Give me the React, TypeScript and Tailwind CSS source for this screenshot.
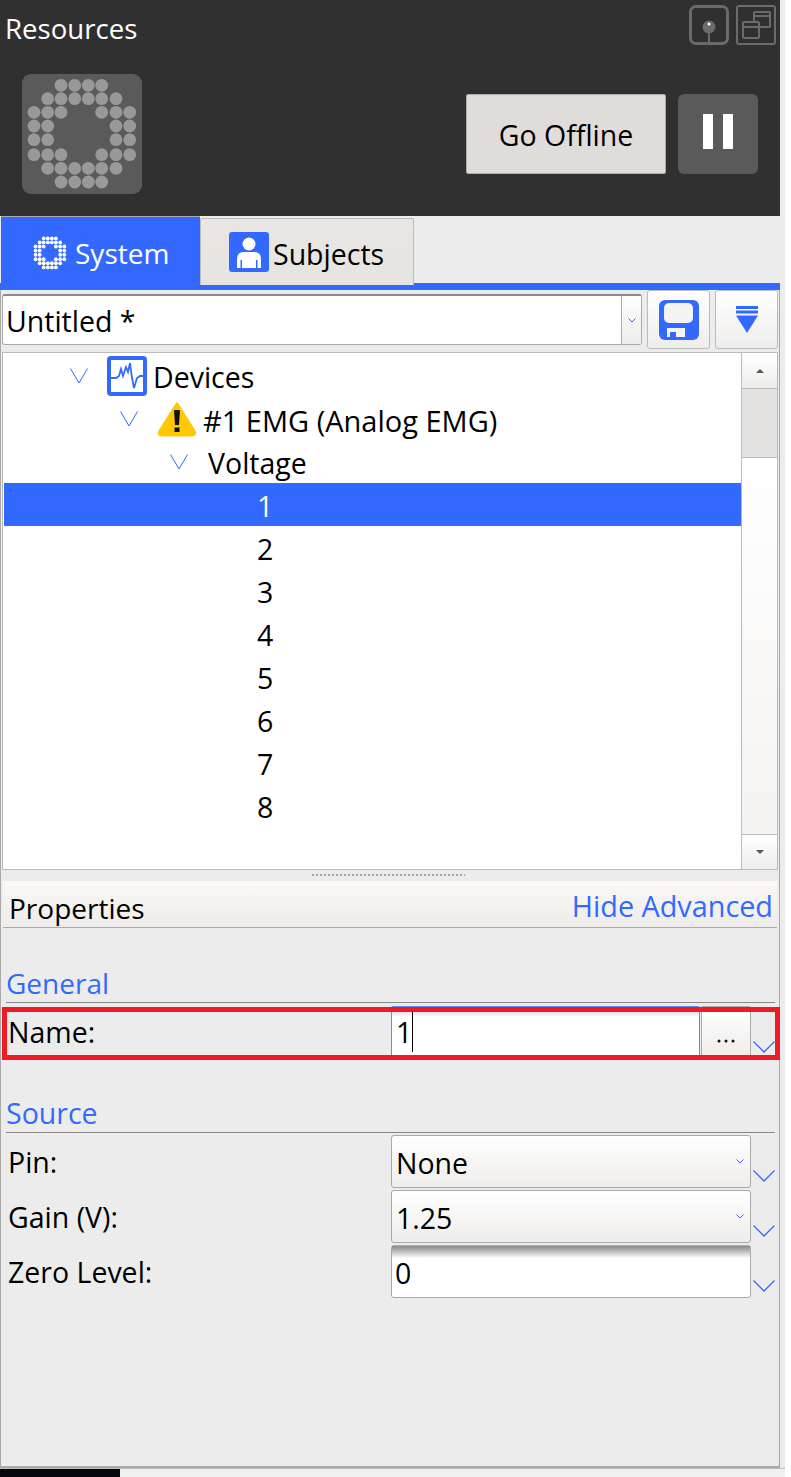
const BLUE = "#3369ff";

const logoRows = [
  [2, 3, 4, 5],
  [1, 2, 3, 4, 5, 6],
  [0, 1, 2, 5, 6, 7],
  [0, 1, 6, 7],
  [0, 1, 6, 7],
  [0, 1, 2, 5, 6, 7],
  [1, 2, 3, 4, 5, 6],
  [2, 3, 4, 5],
];
const logoX = [12, 25.7, 39, 52.7, 66.3, 79.7, 94, 107.7];
const logoY = [11.3, 24.7, 38.3, 52, 65.7, 80.7, 94.3, 108];

const LogoDots = ({ color, size }: { color: string; size: number }) => (
  <svg width={size} height={size} viewBox="0 0 120 120" className="shrink-0">
    {logoRows.map((cols, r) =>
      cols.map((c) => <circle key={`${r}-${c}`} cx={logoX[c]} cy={logoY[r]} r="6.4" fill={color} />)
    )}
  </svg>
);

const Chevron = ({ w = 18, h = 16, color = BLUE }: { w?: number; h?: number; color?: string }) => (
  <svg width={w} height={h} viewBox="0 0 18 16" fill="none" className="shrink-0">
    <path d="M0.5 0.5 L9 15 L17.5 0.5" stroke={color} strokeWidth="1" />
  </svg>
);

const SmallChevron = () => (
  <svg width="8" height="5" viewBox="0 0 8 5" fill="none" className="shrink-0">
    <path d="M0.5 0.5 L4 4 L7.5 0.5" stroke={BLUE} strokeWidth="1" />
  </svg>
);

const RowChevron = () => (
  <svg width="22" height="12" viewBox="0 0 22 12" fill="none" className="shrink-0">
    <path d="M0.5 0.5 L11 11 L21.5 0.5" stroke={BLUE} strokeWidth="1.3" />
  </svg>
);

const TreeRow = ({ children, className = "" }: { children: React.ReactNode; className?: string }) => (
  <div className={`flex h-[43px] items-center ${className}`}>{children}</div>
);

const SelectField = ({ value }: { value: string }) => (
  <div className="flex h-[53px] w-[360px] items-center justify-between rounded-[3px] border border-[#aaaaaa] bg-gradient-to-b from-white to-[#efedeb] pl-[4px] pr-[6px]">
    <span className="mt-[4px]">{value}</span>
    <SmallChevron />
  </div>
);

const PropRow = ({ label, children }: { label: string; children: React.ReactNode }) => (
  <div className="flex h-[53px]">
    <div className="flex w-[390px] items-center pl-[7px] pt-[1px]">{label}</div>
    {children}
    <div className="ml-[2px] flex items-end pb-[6px]">
      <RowChevron />
    </div>
  </div>
);

export default function App() {
  return (
    <div className="relative h-[1477px] w-full overflow-hidden bg-white font-['Open_Sans',sans-serif] text-[28.5px] leading-none text-black">
      <div className="h-[1477px] w-[785px] bg-[#ececec]">
        {/* top bar */}
        <div className="flex h-[216px] w-[780px] justify-between bg-[#303030]">
          <div className="pl-[5px] pt-[10px]">
            <div className="h-[36px] text-[27.6px] leading-[36px] text-white">Resources</div>
            <div className="ml-[17px] mt-[28px] h-[120px] w-[120px] rounded-[9px] bg-[#5a5a5a]">
              <LogoDots color="#999999" size={120} />
            </div>
          </div>
          <div className="flex flex-col items-end pr-[4px] pt-[5px]">
            <div className="flex gap-[7px]">
              <div className="h-[40px] w-[40px] rounded-[7px] border-[3px] border-[#6b6b6b]">
                <svg width="34" height="34" viewBox="0 0 34 34">
                  <circle cx="17" cy="19" r="6.5" fill="#6b6b6b" />
                  <rect x="16" y="21" width="2" height="13" fill="#6b6b6b" />
                  <circle cx="17" cy="16" r="1.5" fill="#ffffff" />
                </svg>
              </div>
              <div className="h-[40px] w-[40px] rounded-[3px] border-2 border-[#6b6b6b]">
                <svg width="36" height="36" viewBox="0 0 36 36" fill="none" stroke="#6b6b6b" strokeWidth="2">
                  <rect x="16" y="5" width="16" height="15" rx="1" />
                  <rect x="5" y="15" width="16" height="16" rx="1" fill="#303030" />
                  <path d="M5 20H21M16 9H32" />
                </svg>
              </div>
            </div>
            <div className="mr-[18px] mt-[49px] flex gap-[12px]">
              <div className="flex h-[80px] w-[200px] items-center justify-center rounded-[2px] border border-[#aaaaaa] bg-[#dfdcda] pt-[2px]">
                Go Offline
              </div>
              <div className="flex h-[80px] w-[80px] items-start justify-center gap-[10px] rounded-[6px] bg-[#5a5a5a] pt-[20px]">
                <div className="h-[35px] w-[10px] bg-white" />
                <div className="h-[35px] w-[10px] bg-white" />
              </div>
            </div>
          </div>
        </div>

        {/* tabs */}
        <div className="flex h-[67px] w-[780px] items-start pl-[1px]">
          <div className="flex h-[67px] w-[199px] items-center border-t border-[#aaaaaa] bg-[#3369ff] pl-[31px] pt-[5px] text-[28px] text-white">
            <LogoDots color="#ffffff" size={36} />
            <span className="ml-[7px]">System</span>
          </div>
          <div className="relative z-10 mt-[2px] flex h-[67px] w-[214px] items-center rounded-t-[2px] border border-b-0 border-[#bbbbbb] bg-gradient-to-b from-[#e9e6e3] to-[#e6e4e1] pl-[28px]">
            <div className="flex h-[40px] w-[40px] items-center justify-center rounded-[3px] bg-[#3369ff]">
              <svg width="40" height="40" viewBox="0 0 40 40" fill="white">
                <circle cx="20" cy="12" r="6.5" />
                <path d="M8 36 V27 Q8 20 15 20 H25 Q32 20 32 27 V36 H28.5 V28 H27 V36 H13 V28 H11.5 V36 Z" />
              </svg>
            </div>
            <span className="ml-[4px] mt-[4px]">Subjects</span>
          </div>
        </div>
        <div className="h-[7px] w-[780px] bg-[#3369ff]" />

        {/* main panel */}
        <div className="h-[1178px] w-[780px] border-x border-b-2 border-[#aaaaaa]">
          <div className="flex h-[62px] pl-[1px]">
            <div className="mt-[4px] flex h-[51px] w-[640px] rounded-[3px] border border-t-2 border-[#aaaaaa] border-t-[#8a8a8a] bg-white">
              <div className="flex flex-1 items-center pl-[3px] pt-[2px]">Untitled *</div>
              <div className="flex w-[20px] items-center justify-center border-l border-[#aaaaaa] bg-gradient-to-b from-white to-[#efedeb]">
                <SmallChevron />
              </div>
            </div>
            <div className="ml-[5px] flex h-[59px] w-[63px] items-center justify-center rounded-[3px] border border-[#bbbbbb] bg-gradient-to-b from-white to-[#efedeb]">
              <svg width="40" height="40" viewBox="0 0 40 40">
                <rect width="40" height="40" rx="6" fill="#3369ff" />
                <rect x="5" y="3" width="29" height="20" rx="5" fill="#f4f4f4" />
                <path d="M8 28 H26 V37 H17 V32 H11 V37 H8 Z" fill="#f4f4f4" />
              </svg>
            </div>
            <div className="ml-[5px] flex h-[59px] w-[63px] items-center justify-center rounded-[3px] border border-[#bbbbbb] bg-gradient-to-b from-white to-[#efedeb]">
              <svg width="22" height="27" viewBox="0 0 22 27" fill="#3369ff">
                <rect x="0" y="0" width="22" height="3" />
                <rect x="0" y="4.5" width="22" height="3" />
                <path d="M0 9.5 H22 L11 27 Z" />
              </svg>
            </div>
          </div>

          {/* tree */}
          <div className="ml-[1px] flex h-[518px] w-[776px] border border-[#bbbbbb] bg-white">
            <div className="flex-1 pl-[1px] pt-[1px]">
              <TreeRow className="pl-[66px]">
                <Chevron />
                <svg width="40" height="40" viewBox="0 0 40 40" className="ml-[19px] shrink-0">
                  <rect width="40" height="40" rx="4" fill="#3369ff" />
                  <rect x="4" y="4" width="32" height="32" fill="white" />
                  <path
                    d="M4 22 H9 L12 20 L14 13 L16 20 L19 11 L21 16 L23 7 L25 22 L27 32 L30 22 L33 20 H36"
                    fill="none"
                    stroke="#3369ff"
                    strokeWidth="1.8"
                  />
                </svg>
                <span className="ml-[6px] mt-[4px]">Devices</span>
              </TreeRow>
              <TreeRow className="pl-[116px]">
                <Chevron />
                <svg width="40" height="36" viewBox="0 0 40 36" className="ml-[19px] shrink-0">
                  <path
                    d="M20 3 L37 30 Q39 34 35 34 H5 Q1 34 3 30 Z"
                    fill="#ffc800"
                    stroke="#ffc800"
                    strokeWidth="3"
                    strokeLinejoin="round"
                  />
                  <path d="M17 9 H23 L22 24 H18 Z" fill="#111111" />
                  <rect x="17.5" y="26.5" width="5" height="4.5" fill="#111111" />
                </svg>
                <span className="ml-[6px] mt-[4px] text-[29px]">#1 EMG (Analog EMG)</span>
              </TreeRow>
              <TreeRow className="pl-[166px]">
                <Chevron />
                <span className="ml-[20px] mt-[4px]">Voltage</span>
              </TreeRow>
              {["1", "2", "3", "4", "5", "6", "7", "8"].map((n, i) => (
                <TreeRow key={n} className={`pl-[253px] pt-[4px] ${i === 0 ? "bg-[#3369ff] text-white" : ""}`}>
                  {n}
                </TreeRow>
              ))}
            </div>
            <div className="flex w-[36px] flex-col border-l border-[#bbbbbb]">
              <div className="flex h-[35px] items-center justify-center bg-gradient-to-b from-white to-[#efedeb]">
                <div className="h-0 w-0 border-x-[4px] border-b-[4px] border-x-transparent border-b-[#555555]" />
              </div>
              <div className="h-[70px] border-y border-[#bbbbbb] bg-[#e3e2e0]" />
              <div className="flex-1 bg-gradient-to-b from-white to-[#f5f3f1]" />
              <div className="flex h-[35px] items-center justify-center border-t border-[#bbbbbb] bg-gradient-to-b from-white to-[#efedeb]">
                <div className="h-0 w-0 border-x-[4px] border-t-[4px] border-x-transparent border-t-[#555555]" />
              </div>
            </div>
          </div>

          {/* splitter */}
          <div className="flex h-[11px] items-start pl-[311px] pt-[4px]">
            <div className="h-[2px] w-[153px] bg-[repeating-linear-gradient(90deg,#aaaaaa_0,#aaaaaa_2px,transparent_2px,transparent_4px)]" />
          </div>

          {/* properties */}
          <div className="ml-[2px] flex h-[47px] w-[774px] justify-between border-b border-[#aaaaaa] bg-gradient-to-b from-[#fbf8f5] to-[#eeecea] pl-[6px] pr-[4px]">
            <span className="pt-[13px] text-[28px]">Properties</span>
            <span className="pt-[11px] text-[28.8px] text-[#3369ff]">Hide Advanced</span>
          </div>

          <div className="ml-[5px] mt-[38px] h-[37px] w-[769px] border-b border-[#888888] pt-[3px] text-[28px] text-[#3369ff]">General</div>
          <div className="mt-[3px]">
            <div className="flex h-[51px]">
              <div className="flex w-[390px] items-center pl-[7px] pt-[2px]">Name:</div>
              <div className="relative flex h-[51px] w-[309px] items-center rounded-t-[2px] border border-t-2 border-[#5b8cff] bg-white pl-[4px]">
                <div className="absolute inset-x-0 top-0 h-[9px] bg-gradient-to-b from-[#c8c8c8] to-white" />
                <span className="relative">1</span>
                <div className="relative h-[40px] w-[1px] bg-black" />
              </div>
              <div className="ml-[1px] flex h-[51px] w-[50px] items-end justify-center rounded-[2px] border border-[#aaaaaa] bg-gradient-to-b from-white to-[#efedeb] pb-[13px]">
                <svg width="18" height="4" viewBox="0 0 18 4" fill="#111111">
                  <circle cx="2" cy="2" r="1.5" />
                  <circle cx="9" cy="2" r="1.5" />
                  <circle cx="16" cy="2" r="1.5" />
                </svg>
              </div>
              <div className="ml-[2px] flex items-end pb-[4px]">
                <RowChevron />
              </div>
            </div>
          </div>

          <div className="ml-[5px] mt-[39px] h-[37px] w-[769px] border-b border-[#888888] pt-[3px] text-[#3369ff]">Source</div>
          <div className="mt-[2px] flex flex-col gap-[2px]">
            <PropRow label="Pin:">
              <SelectField value="None" />
            </PropRow>
            <PropRow label="Gain (V):">
              <SelectField value="1.25" />
            </PropRow>
            <PropRow label="Zero Level:">
              <div className="relative flex h-[53px] w-[360px] items-center rounded-[3px] border border-[#aaaaaa] bg-white pl-[3px] pt-[3px]">
                <div className="absolute inset-x-0 top-0 h-[12px] bg-gradient-to-b from-[#8a8a8a] to-white" />
                <span className="relative">0</span>
              </div>
            </PropRow>
          </div>
        </div>

        {/* bottom strip */}
        <div className="h-[9px] border-t border-[#bbbbbb] bg-[#f0f0f0]">
          <div className="h-[9px] w-[120px] bg-[#05080c]" />
        </div>
      </div>

      {/* highlight drawn over the name row */}
      <div className="absolute left-[2px] top-[1007px] h-[53px] w-[778px] border-[5px] border-[#ed1c24]" />
    </div>
  );
}
